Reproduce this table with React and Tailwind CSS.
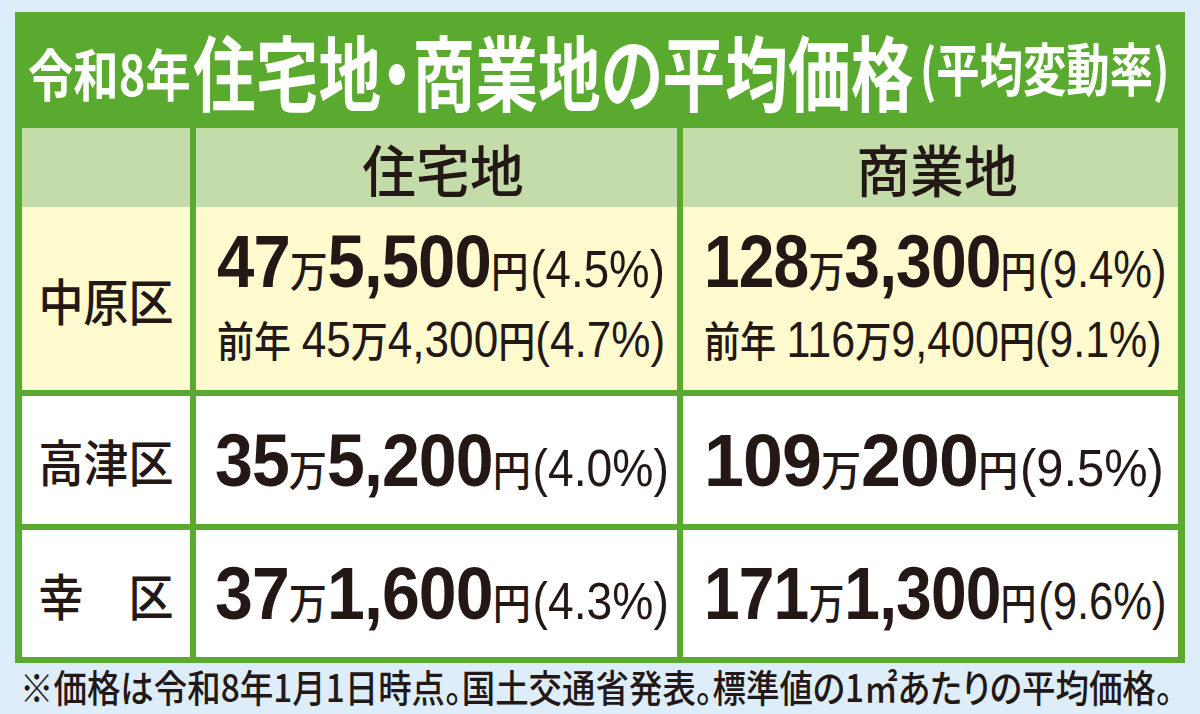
import React from "react";

function Line1({ a, b, pct, sc }) {
  return (
    <div className={"flex items-baseline w-max origin-left leading-none text-[#231815] " + sc}>
      <span className="font-['Liberation_Sans',sans-serif] font-bold text-[75px] tracking-[-1px]">{a}</span>
      <span className="font-medium text-[42px]">万</span>
      <span className="font-['Liberation_Sans',sans-serif] font-bold text-[75px] tracking-[-1px]">{b}</span>
      <span className="font-medium text-[42px]">円</span>
      <span className="font-['Liberation_Sans',sans-serif] text-[51px] ml-[2px]">({pct}%)</span>
    </div>
  );
}

function Line2({ a, b, pct, sc }) {
  return (
    <div className={"flex items-baseline w-max origin-left leading-none text-[#231815] mt-[16px] " + sc}>
      <span className="font-medium text-[42px]">前年</span>
      <span className="font-['Liberation_Sans',sans-serif] text-[50px] ml-[12px]">{a}</span>
      <span className="font-medium text-[42px]">万</span>
      <span className="font-['Liberation_Sans',sans-serif] text-[50px]">{b}</span>
      <span className="font-medium text-[42px]">円</span>
      <span className="font-['Liberation_Sans',sans-serif] text-[50px]">({pct}%)</span>
    </div>
  );
}

function Label({ children }) {
  return (
    <span className="inline-block origin-center scale-x-[0.9] text-[50px] leading-none font-medium text-[#231815] whitespace-nowrap">
      {children}
    </span>
  );
}

function Head({ children }) {
  return (
    <span className="inline-block origin-center scale-x-[0.96] text-[56px] leading-none font-medium text-[#231815] whitespace-nowrap">
      {children}
    </span>
  );
}

export default function App() {
  return (
    <div className="w-[1200px] h-[714px] bg-[#ddeefa] pt-[12px] pl-[15px] overflow-hidden font-['Noto_Sans_CJK_JP',sans-serif]">
      <div className="w-[1170px] bg-[#5aaa30]">
        <div className="h-[116px] flex items-center pl-[13px] text-white whitespace-nowrap">
          <span className="inline-block w-[165px] mt-[4px]">
            <span className="inline-block origin-left scale-x-[0.81] text-[56px] leading-none font-bold">令和8年</span>
          </span>
          <span className="inline-block w-[727px]">
            <span className="inline-block origin-left scale-x-[0.765] text-[82px] leading-none font-bold [font-feature-settings:'palt']">住宅地・商業地の平均価格</span>
          </span>
          <span className="inline-block -mt-[6px]">
            <span className="inline-block origin-left scale-x-[0.76] text-[57px] leading-none font-bold">(平均変動率)</span>
          </span>
        </div>
        <div className="px-[7px] pb-[6px]">
          <div className="grid grid-cols-[168px_481px_495px] gap-x-[6px] h-[79px]">
            <div className="bg-[#c4dcaa]" />
            <div className="bg-[#c4dcaa] flex items-center justify-center pl-[12px]">
              <Head>住宅地</Head>
            </div>
            <div className="bg-[#c4dcaa] flex items-center justify-center pl-[12px]">
              <Head>商業地</Head>
            </div>
          </div>
          <div className="grid grid-cols-[168px_481px_495px] gap-x-[6px] h-[183px]">
            <div className="bg-[#fffbcf] flex items-center justify-center">
              <Label>中原区</Label>
            </div>
            <div className="bg-[#fffbcf] flex flex-col justify-center pl-[21px] pb-[8px]">
              <Line1 a="47" b="5,500" pct="4.5" sc="scale-x-[0.895]" />
              <Line2 a="45" b="4,300" pct="4.7" sc="scale-x-[0.882]" />
            </div>
            <div className="bg-[#fffbcf] flex flex-col justify-center pl-[21px] pb-[8px]">
              <Line1 a="128" b="3,300" pct="9.4" sc="scale-x-[0.855]" />
              <Line2 a="116" b="9,400" pct="9.1" sc="scale-x-[0.86]" />
            </div>
          </div>
          <div className="grid grid-cols-[168px_481px_495px] gap-x-[6px] h-[128px] mt-[6px]">
            <div className="bg-white flex items-center justify-center">
              <Label>高津区</Label>
            </div>
            <div className="bg-white flex items-center pl-[19px]">
              <Line1 a="35" b="5,200" pct="4.0" sc="scale-x-[0.907]" />
            </div>
            <div className="bg-white flex items-center pl-[21px]">
              <Line1 a="109" b="200" pct="9.5" sc="scale-x-[0.957]" />
            </div>
          </div>
          <div className="grid grid-cols-[168px_481px_495px] gap-x-[6px] h-[127px] mt-[6px]">
            <div className="bg-white flex items-center justify-center">
              <Label>幸　区</Label>
            </div>
            <div className="bg-white flex items-center pl-[19px]">
              <Line1 a="37" b="1,600" pct="4.3" sc="scale-x-[0.907]" />
            </div>
            <div className="bg-white flex items-center pl-[21px]">
              <Line1 a="171" b="1,300" pct="9.6" sc="scale-x-[0.855]" />
            </div>
          </div>
        </div>
      </div>
      <div className="mt-[4px] pl-[5px] whitespace-nowrap">
        <span className="inline-block origin-left scale-x-[0.88] text-[38px] leading-none font-medium text-[#231815] [font-feature-settings:'palt']">
          ※価格は令和8年1月1日時点。国土交通省発表。標準値の1㎡あたりの平均価格。
        </span>
      </div>
    </div>
  );
}
